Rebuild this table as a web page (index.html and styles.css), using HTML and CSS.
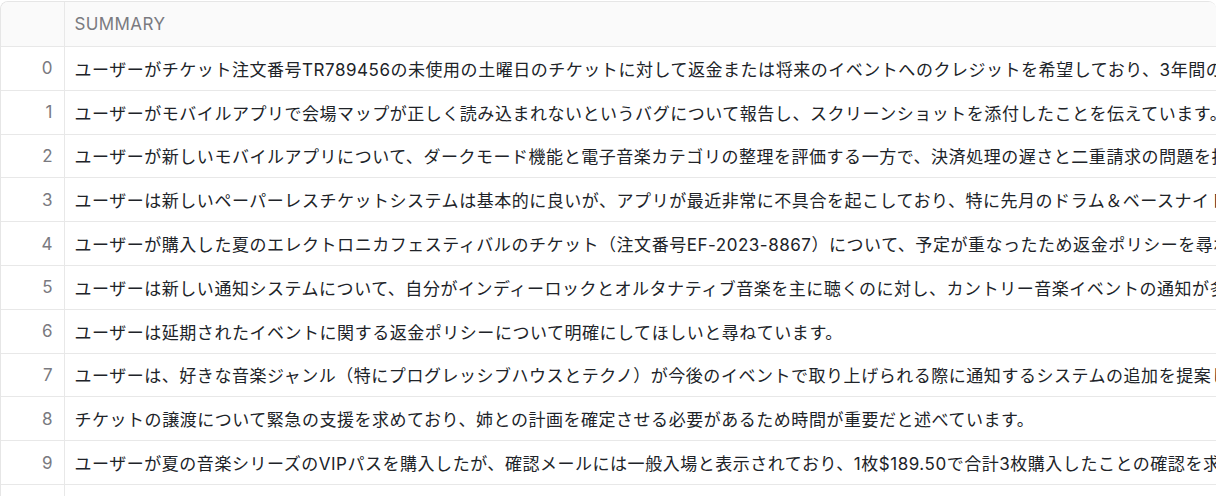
FILE: index.html
```html
<!DOCTYPE html>
<html lang="ja">
<head>
<meta charset="utf-8">
<link rel="stylesheet" href="styles.css">
</head>
<body>
<div class="frame">
  <table class="grid">
    <thead>
      <tr><th class="idx"></th><th class="col">SUMMARY</th></tr>
    </thead>
    <tbody>
      <tr><td class="idx">0</td><td class="col">ユーザーがチケット注文番号TR789456の未使用の土曜日のチケットに対して返金または将来のイベントへのクレジットを希望しており、3年間の利用実績を考慮してほしいと伝えています。</td></tr>
      <tr><td class="idx">1</td><td class="col">ユーザーがモバイルアプリで会場マップが正しく読み込まれないというバグについて報告し、スクリーンショットを添付したことを伝えています。</td></tr>
      <tr><td class="idx">2</td><td class="col">ユーザーが新しいモバイルアプリについて、ダークモード機能と電子音楽カテゴリの整理を評価する一方で、決済処理の遅さと二重請求の問題を指摘しています。</td></tr>
      <tr><td class="idx">3</td><td class="col">ユーザーは新しいペーパーレスチケットシステムは基本的に良いが、アプリが最近非常に不具合を起こしており、特に先月のドラム＆ベースナイトで入場に苦労したと述べています。</td></tr>
      <tr><td class="idx">4</td><td class="col">ユーザーが購入した夏のエレクトロニカフェスティバルのチケット（注文番号EF-2023-8867）について、予定が重なったため返金ポリシーを尋ねています。</td></tr>
      <tr><td class="idx">5</td><td class="col">ユーザーは新しい通知システムについて、自分がインディーロックとオルタナティブ音楽を主に聴くのに対し、カントリー音楽イベントの通知が多すぎると不満を述べています。</td></tr>
      <tr><td class="idx">6</td><td class="col">ユーザーは延期されたイベントに関する返金ポリシーについて明確にしてほしいと尋ねています。</td></tr>
      <tr><td class="idx">7</td><td class="col">ユーザーは、好きな音楽ジャンル（特にプログレッシブハウスとテクノ）が今後のイベントで取り上げられる際に通知するシステムの追加を提案しています。</td></tr>
      <tr><td class="idx">8</td><td class="col">チケットの譲渡について緊急の支援を求めており、姉との計画を確定させる必要があるため時間が重要だと述べています。</td></tr>
      <tr><td class="idx">9</td><td class="col">ユーザーが夏の音楽シリーズのVIPパスを購入したが、確認メールには一般入場と表示されており、1枚$189.50で合計3枚購入したことの確認を求めています。</td></tr>
      <tr><td class="idx"></td><td class="col"></td></tr>
    </tbody>
  </table>
</div>
</body>
</html>
```

FILE: styles.css
```css
html, body {
  margin: 0;
  padding: 0;
  background: #ffffff;
}
body {
  font-family: Inter, "Noto Sans CJK JP", sans-serif;
  color: #1f2328;
}
.frame {
  width: 1216px;
  height: 496px;
  overflow: hidden;
  border-top: 1px solid #e6e6e6;
  border-left: 1px solid #e6e6e6;
  border-radius: 8px 8px 0 0;
  box-sizing: border-box;
  margin-top: 1px;
}
.grid {
  border-collapse: collapse;
  table-layout: fixed;
  width: 2400px;
}
.grid th, .grid td {
  padding: 0 10px;
  white-space: nowrap;
  overflow: hidden;
  border-bottom: 1px solid #e8e8e8;
  font-size: 17px;
  text-align: left;
}
.grid th {
  height: 44px;
  background: #fafafa;
  color: #7a7a80;
  font-weight: 400;
  letter-spacing: 0.4px;
}
.grid td {
  height: 42.8px;
  color: #202328;
  letter-spacing: 0.53px;
}
.grid .idx {
  width: 63px;
  box-sizing: border-box;
  padding: 0 11px 0 0;
  text-align: right;
  color: #7a7a80;
  border-right: 1px solid #e8e8e8;
  letter-spacing: 0;
}
```
